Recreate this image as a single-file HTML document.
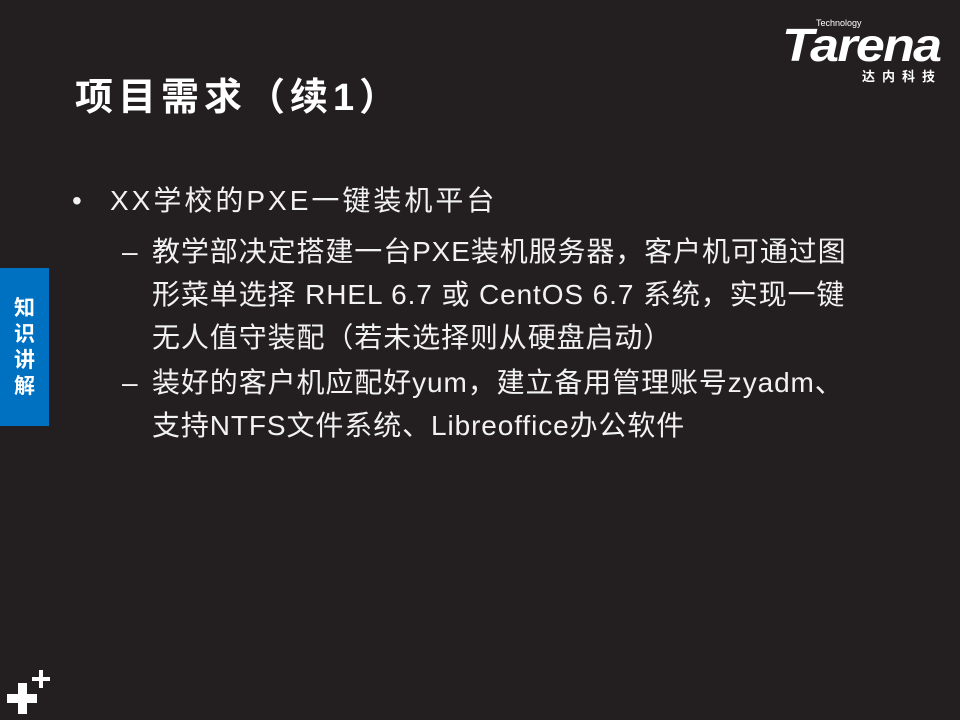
<!DOCTYPE html>
<html><head><meta charset="utf-8"><style>
html,body{margin:0;padding:0}
body{width:960px;height:720px;background:#231f20;position:relative;overflow:hidden;font-family:"Liberation Sans","Noto Sans CJK SC",sans-serif;color:#f2f2f2}
.a{position:absolute;white-space:nowrap}
.t{left:75px;top:73px;font-size:38px;font-weight:bold;color:#fff;line-height:50px;letter-spacing:5px}
.l{font-size:28px;line-height:43px}
.tab{left:0;top:268px;width:49px;height:158px;background:#0070c0}
.tab div{position:absolute;left:12px;top:28px;width:25px;font-size:21px;font-weight:bold;color:#fff;line-height:26px;text-align:center;white-space:normal}
.p{background:#fff;position:absolute}
</style></head><body>
<div class="a" style="left:782px;top:18px;width:162px;height:64px">
<div class="a" style="left:34px;top:0;font-size:9px;color:#fff">Technology</div>
<div class="a" style="left:0;top:2px;font-size:46px;font-weight:bold;font-style:italic;color:#fff;letter-spacing:-1.5px;line-height:50px;transform:scaleX(1.13);transform-origin:left">Tarena</div>
<div class="a" style="left:80px;top:48px;font-size:13px;font-weight:bold;color:#fff;letter-spacing:7px">达内科技</div>
</div>
<div class="a t">项目需求（续1）</div>
<div class="a l" style="left:72px;top:179px">•</div>
<div class="a l" style="left:110px;top:179px;letter-spacing:3px">XX学校的PXE一键装机平台</div>
<div class="a l" style="left:122px;top:230px">–</div>
<div class="a l" style="left:152px;top:230px;letter-spacing:0.9px">教学部决定搭建一台PXE装机服务器，客户机可通过图<br>形菜单选择 RHEL 6.7 或 CentOS 6.7 系统，实现一键<br>无人值守装配（若未选择则从硬盘启动）</div>
<div class="a l" style="left:122px;top:361px">–</div>
<div class="a l" style="left:152px;top:361px;letter-spacing:0.9px">装好的客户机应配好yum，建立备用管理账号zyadm、<br>支持NTFS文件系统、Libreoffice办公软件</div>
<div class="a tab"><div>知识讲解</div></div>
<div class="p" style="left:7px;top:694px;width:30px;height:9px"></div>
<div class="p" style="left:18px;top:683px;width:9px;height:31px"></div>
<div class="p" style="left:32px;top:677px;width:18px;height:4px"></div>
<div class="p" style="left:39px;top:670px;width:4px;height:18px"></div>
</body></html>
